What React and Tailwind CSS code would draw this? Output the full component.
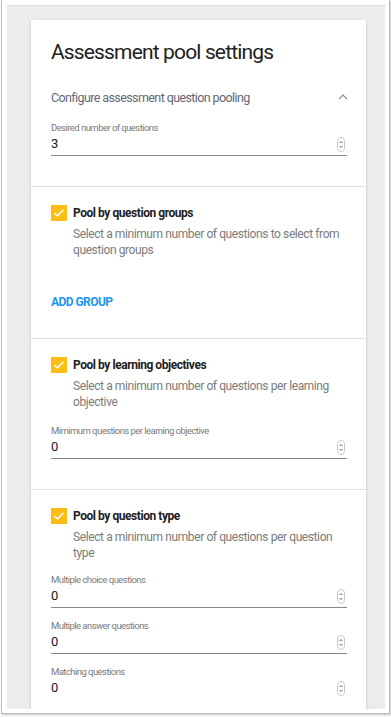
import React from 'react';

function Spinner() {
  return (
    <svg width="8" height="15" viewBox="0 0 8 15" className="shrink-0">
      <rect x="0.5" y="0.5" width="7" height="14" rx="3.5" fill="#fff" stroke="#c9c9c9" />
      <path d="M2.5 6L4 4.5L5.5 6" fill="none" stroke="#555" strokeWidth="0.9" />
      <path d="M2.5 9L4 10.5L5.5 9" fill="none" stroke="#555" strokeWidth="0.9" />
    </svg>
  );
}

function NumberField({ label, value, className = '', underline = true }) {
  return (
    <div className={className}>
      <div className="text-[9.5px] leading-[14px] tracking-[-0.55px] text-[#7a7a7a]">{label}</div>
      <div
        className={`flex items-center justify-between pb-[2px] ${
          underline ? 'border-b border-[#8a8a8a]' : ''
        }`}
      >
        <span className="text-[13px] leading-[18px] text-[#1a1a1a]">{value}</span>
        <span className="mr-[2px] flex items-center">
          <Spinner />
        </span>
      </div>
    </div>
  );
}

function Checkbox() {
  return (
    <div className="w-4 h-4 bg-[#fdbd12] flex items-center justify-center shrink-0">
      <svg width="12" height="10" viewBox="0 0 12 10">
        <path d="M1.5 5.2L4.5 8L10.5 1.8" fill="none" stroke="#fff" strokeWidth="1.6" />
      </svg>
    </div>
  );
}

function PoolHeader({ title, description }) {
  return (
    <>
      <div className="flex items-start gap-[6px]">
        <Checkbox />
        <span className="text-[12px] leading-[16px] tracking-[-0.45px] font-bold text-[#212121]">{title}</span>
      </div>
      <p className="mt-[5px] ml-[22px] text-[12px] leading-[16px] tracking-[-0.4px] text-[#7b7b7b]">{description}</p>
    </>
  );
}

export default function App() {
  return (
    <div className="w-[391px] h-[718px] bg-white overflow-hidden" style={{ fontFamily: 'Roboto, "Noto Sans", sans-serif' }}>
      <div className="ml-[1px] w-[389px] h-[714px] bg-white border-x border-b border-[#bdbdbd] shadow-[1px_1px_2px_rgba(0,0,0,0.25)] pt-[5px] pl-[5px] pr-[4px] pb-[4px]">
        <div className="h-[704px] bg-[#ececec] border-t border-[#dcdcdc] overflow-hidden pt-[14px] pl-[24px]">
          <div className="w-[335px] bg-white rounded-[2px] shadow-[0_1px_3px_rgba(0,0,0,0.18)]">
            {/* header / desired count */}
            <section className="pl-5 pr-[19px] pt-[18px] pb-[30px]">
              <h1 className="text-[21px] leading-[28px] tracking-[-0.85px] text-[#212121]">Assessment pool settings</h1>
              <div className="mt-[22px] flex items-center justify-between">
                <span className="text-[12.5px] leading-[20px] tracking-[-0.6px] text-[#5f6775]">
                  Configure assessment question pooling
                </span>
                <svg width="10" height="6" viewBox="0 0 10 6" className="mr-[-1px] mb-[3px]">
                  <path d="M1 5L5 1L9 5" fill="none" stroke="#8a8a8a" strokeWidth="1.1" />
                </svg>
              </div>
              <NumberField className="mt-[13px]" label="Desired number of questions" value="3" />
            </section>

            {/* question groups */}
            <section className="border-t border-[#e0e0e0] pl-5 pr-[19px] pt-[18px] pb-[28px]">
              <PoolHeader
                title="Pool by question groups"
                description="Select a minimum number of questions to select from question groups"
              />
              <button className="mt-[36px] block text-[12px] leading-[16px] tracking-[-0.55px] font-bold text-[#2196f3]">
                ADD GROUP
              </button>
            </section>

            {/* learning objectives */}
            <section className="border-t border-[#e0e0e0] pl-5 pr-[19px] pt-[18px] pb-[30px]">
              <PoolHeader
                title="Pool by learning objectives"
                description="Select a minimum number of questions per learning objective"
              />
              <NumberField
                className="mt-[14px]"
                label="Mimimum questions per learning objective"
                value="0"
              />
            </section>

            {/* question type */}
            <section className="border-t border-[#e0e0e0] pl-5 pr-[19px] pt-[18px] pb-[30px]">
              <PoolHeader
                title="Pool by question type"
                description="Select a minimum number of questions per question type"
              />
              <NumberField className="mt-[12px]" label="Multiple choice questions" value="0" />
              <NumberField className="mt-[11px]" label="Multiple answer questions" value="0" />
              <NumberField className="mt-[11px]" label="Matching questions" value="0" underline={false} />
            </section>
          </div>
        </div>
      </div>
    </div>
  );
}
